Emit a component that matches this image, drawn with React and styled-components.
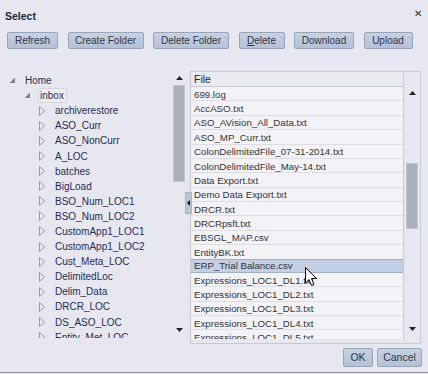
import React from 'react';
import styled, { createGlobalStyle } from 'styled-components';

const Global = createGlobalStyle`
  html, body { margin: 0; padding: 0; background: #e7e8ef; }
  body { font-family: "Liberation Sans", Arial, sans-serif; }
  #root { width: 428px; height: 374px; overflow: hidden; }
`;

const Dialog = styled.div`
  position: relative;
  width: 428px;
  height: 373px;
  box-sizing: border-box;
  background: #e7e8ef;
  border-bottom: 1px solid #8d9099;
  display: flex;
  flex-direction: column;
`;

const TitleBar = styled.div`
  height: 28px;
  box-sizing: border-box;
  padding: 3px 6px 0 5px;
  display: flex;
  align-items: center;
  justify-content: space-between;
`;

const Title = styled.span`
  font-weight: bold;
  font-size: 10.5px;
  color: #1d2540;
`;

const Close = styled.span`
  font-size: 10px;
  color: #2a2f3a;
  line-height: 1;
  margin-top: -4px;
`;

const Toolbar = styled.div`
  display: flex;
  gap: 9.5px;
  padding-left: 7px;
  margin-top: 4px;
`;

const Btn = styled.button`
  width: ${p => p.$w}px;
  height: ${p => p.$h || 17}px;
  padding: 0;
  box-sizing: border-box;
  border: 1px solid #97a5bb;
  border-radius: 2px;
  background: linear-gradient(#c6d1e1, #b4c1d5);
  color: #2f3546;
  font-family: "Liberation Sans", Arial, sans-serif;
  font-size: ${p => p.$fs || 10}px;
  line-height: 1;
  display: flex;
  align-items: center;
  justify-content: center;
  u { text-decoration: underline; }
`;

const Main = styled.div`
  display: flex;
  margin-top: 22px;
  height: 273px;
  padding-left: 5px;
`;

const LeftPanel = styled.div`
  display: flex;
  width: 182px;
  padding-top: 1px;
  height: 266px;
`;

const Tree = styled.div`
  width: 167px;
  height: 266px;
  overflow: hidden;
  padding-top: 1px;
  box-sizing: border-box;
`;

const TreeRow = styled.div`
  height: 15.1px;
  display: flex;
  align-items: center;
  padding-left: ${p => 4 + p.$level * 15}px;
  font-size: 10px;
  color: #1f2c58;
  white-space: nowrap;
`;

const Toggle = styled.span`
  width: 14px;
  flex: none;
  display: flex;
  align-items: center;
`;

const Label = styled.span`
  padding: 1px 2px 1px 1px;
  border: 1px solid ${p => (p.$boxed ? '#d3d6df' : 'transparent')};
  background: ${p => (p.$boxed ? '#eceef4' : 'transparent')};
  line-height: 11px;
`;

const VScroll = styled.div`
  width: ${p => p.$w}px;
  display: flex;
  flex-direction: column;
  padding-top: ${p => p.$top || 0}px;
  box-sizing: border-box;
`;

const ArrowBox = styled.div`
  height: ${p => p.$h || 12}px;
  display: flex;
  align-items: center;
  justify-content: center;
  flex: none;
`;

const Thumb = styled.div`
  margin-top: ${p => p.$mt}px;
  margin-left: ${p => p.$ml}px;
  width: ${p => p.$w}px;
  height: ${p => p.$h}px;
  box-sizing: border-box;
  background: #acb0b8;
  border: 1px solid #c2c5cc;
  flex: none;
`;

const Spacer = styled.div`
  flex: 1;
`;

const Splitter = styled.div`
  position: relative;
  width: 3px;
`;

const CollapseTab = styled.div`
  position: absolute;
  left: -2px;
  top: 121px;
  width: 5px;
  height: 20px;
  background: #b9c4d6;
  border: 1px solid #a8b3c6;
  display: flex;
  align-items: center;
  justify-content: center;
`;

const RightPanel = styled.div`
  width: 231px;
  height: 273px;
  box-sizing: border-box;
  border: 1px solid #c6cad3;
  display: flex;
  padding-bottom: 4px;
`;

const Table = styled.div`
  width: 213px;
  display: flex;
  flex-direction: column;
  border-right: 1px solid #c6cad3;
  box-sizing: border-box;
`;

const Header = styled.div`
  height: 15px;
  flex: none;
  box-sizing: border-box;
  border-bottom: 1px solid #c6cad3;
  background: #e9eaf0;
  padding-left: 3px;
  font-size: 10.5px;
  color: #222;
  display: flex;
  align-items: center;
`;

const Rows = styled.div`
  flex: 1;
  overflow: hidden;
`;

const FileRow = styled.div`
  height: 14.375px;
  box-sizing: border-box;
  padding-left: 3px;
  display: flex;
  align-items: center;
  font-size: 9.7px;
  color: #303338;
  white-space: nowrap;
  background: ${p => (p.$sel ? '#c3cfe3' : '#f3f3f7')};
  border-bottom: 1px solid ${p => (p.$sel ? '#9eafca' : '#dcdee4')};
  border-top: 1px solid ${p => (p.$sel ? '#9eafca' : 'transparent')};
  margin-top: ${p => (p.$sel ? '-1px' : '0')};
`;

const Footer = styled.div`
  display: flex;
  justify-content: flex-end;
  gap: 4px;
  padding-right: 6px;
  margin-top: 4px;
`;

const Cursor = styled.svg`
  position: absolute;
  left: 305px;
  top: 267px;
`;

const Expanded = () => (
  <svg width="7" height="7" viewBox="0 0 7 7">
    <polygon points="6,0.5 6,6 0.5,6" fill="#7f8188" />
  </svg>
);

const Collapsed = () => (
  <svg width="6" height="10" viewBox="0 0 6 10">
    <polygon points="0.5,0.5 5.5,5 0.5,9.5" fill="none" stroke="#9a9ca3" strokeWidth="1" />
  </svg>
);

const Up = () => (
  <svg width="7" height="4" viewBox="0 0 7 4">
    <polygon points="3.5,0 7,4 0,4" fill="#222" />
  </svg>
);

const Down = () => (
  <svg width="7" height="4" viewBox="0 0 7 4">
    <polygon points="0,0 7,0 3.5,4" fill="#222" />
  </svg>
);

const LeftArrow = () => (
  <svg width="3" height="6" viewBox="0 0 3 6">
    <polygon points="3,0 3,6 0,3" fill="#111" />
  </svg>
);

const treeItems = [
  { name: 'Home', level: 0, exp: true },
  { name: 'inbox', level: 1, exp: true, boxed: true },
  ...[
    'archiverestore', 'ASO_Curr', 'ASO_NonCurr', 'A_LOC', 'batches', 'BigLoad',
    'BSO_Num_LOC1', 'BSO_Num_LOC2', 'CustomApp1_LOC1', 'CustomApp1_LOC2',
    'Cust_Meta_LOC', 'DelimitedLoc', 'Delim_Data', 'DRCR_LOC', 'DS_ASO_LOC',
    'Entity_Met_LOC',
  ].map(n => ({ name: n, level: 2 })),
];

const files = [
  '699.log', 'AccASO.txt', 'ASO_AVision_All_Data.txt', 'ASO_MP_Curr.txt',
  'ColonDelimitedFile_07-31-2014.txt', 'ColonDelimitedFile_May-14.txt',
  'Data Export.txt', 'Demo Data Export.txt', 'DRCR.txt', 'DRCRpsft.txt',
  'EBSGL_MAP.csv', 'EntityBK.txt', 'ERP_Trial Balance.csv',
  'Expressions_LOC1_DL1.txt', 'Expressions_LOC1_DL2.txt', 'Expressions_LOC1_DL3.txt',
  'Expressions_LOC1_DL4.txt', 'Expressions_LOC1_DL5.txt',
];

export default function App() {
  return (
    <>
      <Global />
      <Dialog>
        <TitleBar>
          <Title>Select</Title>
          <Close>✕</Close>
        </TitleBar>
        <Toolbar>
          <Btn $w={51}>Refresh</Btn>
          <Btn $w={76}>Create Folder</Btn>
          <Btn $w={76}>Delete Folder</Btn>
          <Btn $w={46}><span><u>D</u>elete</span></Btn>
          <Btn $w={60}>Download</Btn>
          <Btn $w={49}>Upload</Btn>
        </Toolbar>
        <Main>
          <LeftPanel>
            <Tree>
              {treeItems.map(it => (
                <TreeRow key={it.name} $level={it.level}>
                  <Toggle>{it.exp ? <Expanded /> : <Collapsed />}</Toggle>
                  <Label $boxed={it.boxed}>{it.name}</Label>
                </TreeRow>
              ))}
            </Tree>
            <VScroll $w={15}>
              <ArrowBox $h={12}><Up /></ArrowBox>
              <Thumb $mt={1} $ml={1} $w={12} $h={97} />
              <Spacer />
              <ArrowBox $h={16}><Down /></ArrowBox>
            </VScroll>
          </LeftPanel>
          <Splitter>
            <CollapseTab><LeftArrow /></CollapseTab>
          </Splitter>
          <RightPanel>
            <Table>
              <Header>File</Header>
              <Rows>
                {files.map(f => (
                  <FileRow key={f} $sel={f === 'ERP_Trial Balance.csv'}>{f}</FileRow>
                ))}
              </Rows>
            </Table>
            <VScroll $w={16} $top={15}>
              <ArrowBox $h={12}><Up /></ArrowBox>
              <Thumb $mt={64} $ml={2} $w={12} $h={66} />
              <Spacer />
              <ArrowBox $h={20}><Down /></ArrowBox>
            </VScroll>
          </RightPanel>
        </Main>
        <Footer>
          <Btn $w={30} $h={19} $fs={10.5}>OK</Btn>
          <Btn $w={45} $h={19} $fs={10.5}>Cancel</Btn>
        </Footer>
        <Cursor width="13" height="20" viewBox="0 0 13 20">
          <path d="M0.5,0.5 L0.5,16 L4,12.5 L6.5,18.5 L9,17.5 L6.5,11.5 L11.5,11.5 Z" fill="#fff" stroke="#000" strokeWidth="1" strokeLinejoin="miter" />
        </Cursor>
      </Dialog>
    </>
  );
}
